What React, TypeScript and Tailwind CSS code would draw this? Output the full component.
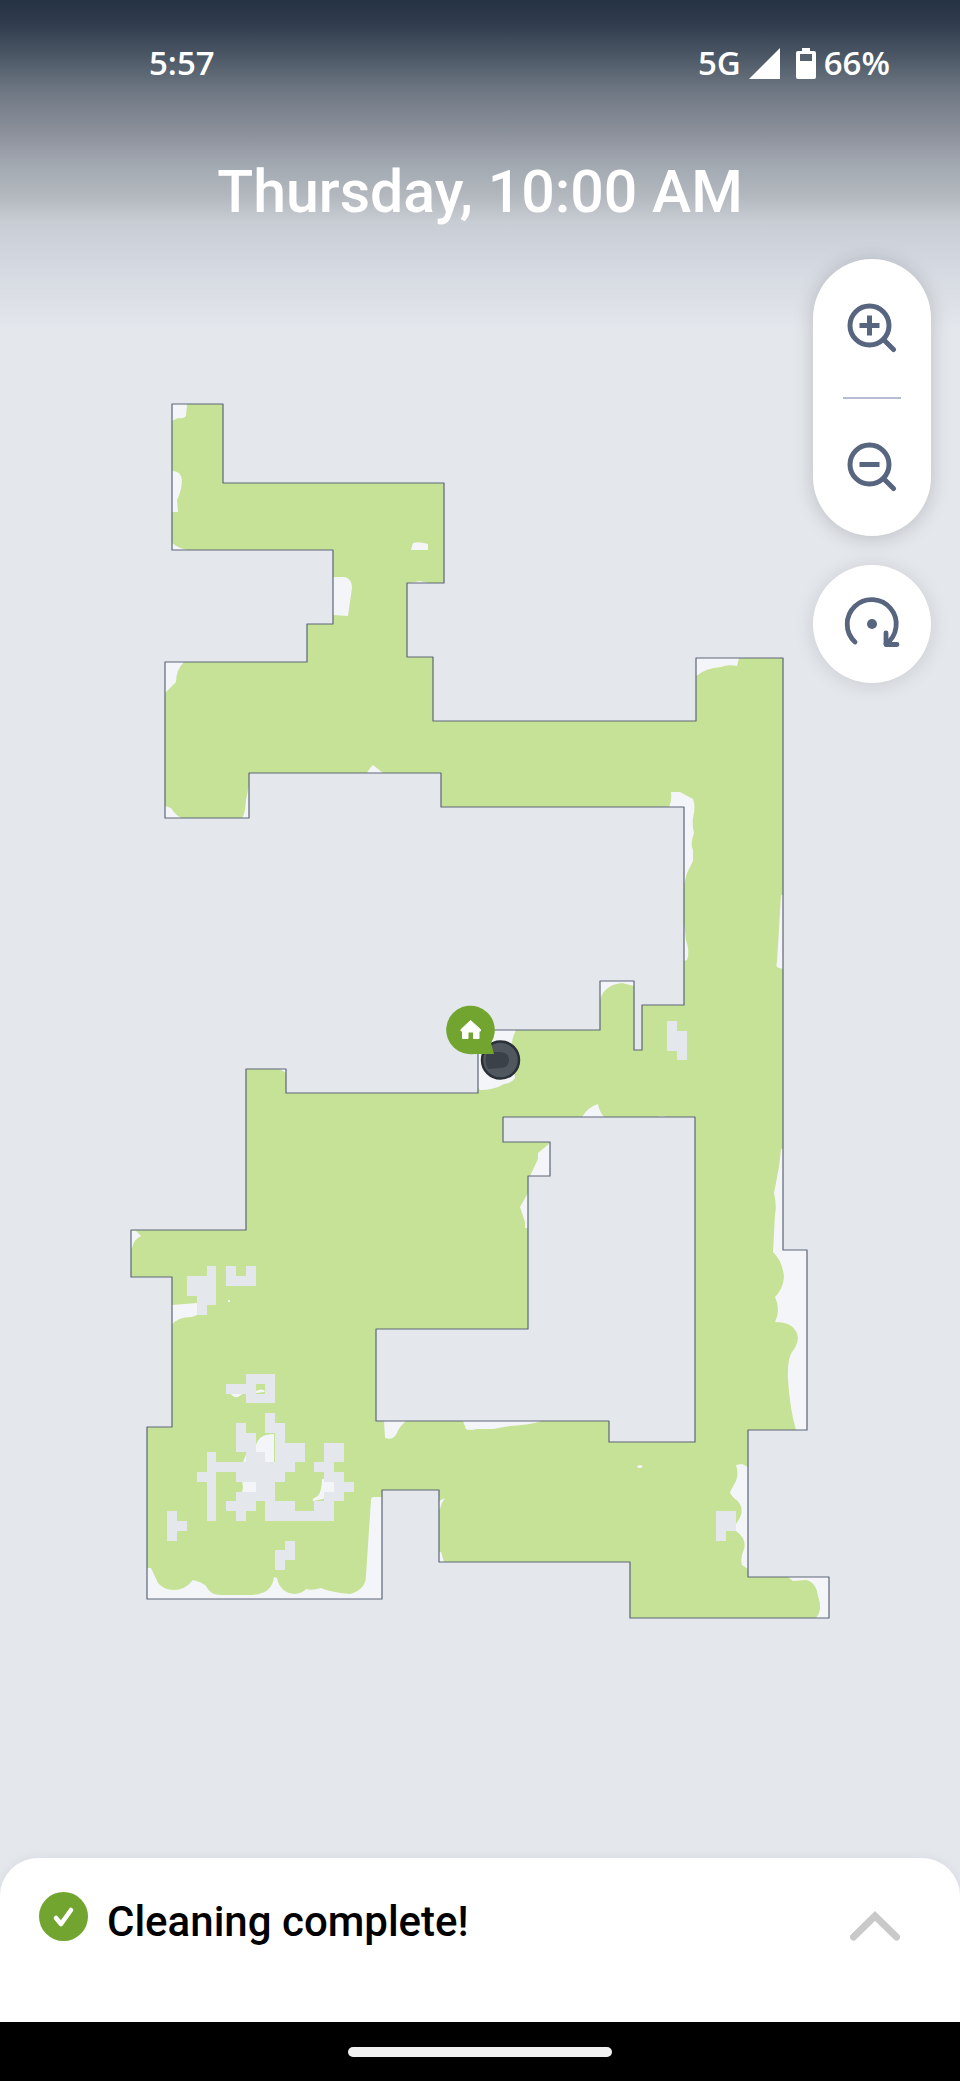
import { useState } from 'react';

// Floor outline: outer wall first, then the enclosed block in the middle
const FLOOR =
  'M172 404H223V483H444V583H407V657H433V721H696V658H783V1250H807V1430H748V1577H829V1618H630V1562H439V1490H382V1599H147V1427H172V1277H131V1230H246V1069H286V1093H478V1030H600V981H634V1050H642V1005H684V807H441V773H249V818H165V662H307V624H333V550H172Z' +
  'M503 1117H695V1442H609V1421H376V1329H528V1176H550V1142H503Z';

// Spots the robot did not reach
const MISSED = [
  'M172 404H187L186 416Q184 419 178 418L172 421Z',
  'M172 471Q181 471 182 480Q182 490 177 500L178 512H172Z',
  'M172 543Q178 548 187 550H172Z',
  'M411 550L413 543Q419 541 428 544V550Z',
  'M409 583L420 581L428 583Z',
  'M333 577H345Q352 579 352 588L348 616L333 615Z',
  'M165 662H184Q176 670 176 682L165 693Z',
  'M367 773Q371 766 373 765L383 773Z',
  'M165 806L171 808Q176 816 182 818H165Z',
  'M249 785L246 800Q245 815 242 818H249Z',
  'M696 658H739L737 666Q728 664 721 667Q706 668 696 676Z',
  'M669 807Q672 800 671 792H680L693 799Q696 806 693 818Q692 824 694 833Q690 844 693 850V861L687 873L684 885V807Z',
  'M684 923L686 940Q690 952 687 960L684 961Z',
  'M781 895L777 962Q775 967 779 968L783 969V895Z',
  'M600 1000Q604 985 622 983L634 986V981H600Z',
  'M478 1030H516Q512 1038 512 1044L515 1078Q512 1083 504 1084Q494 1090 480 1090L478 1088Z',
  'M582 1117Q588 1107 598 1104Q599 1111 604 1117Z',
  'M657 1117L662 1116L667 1117Z',
  'M550 1143L538 1153V1159L530 1176H550Z',
  'M528 1193L520 1207L525 1222V1228H528Z',
  'M131 1230L136 1231L141 1236Q134 1239 132 1248H131Z',
  'M172 1305L197 1303V1315L192 1317Q177 1317 172 1325Z',
  'M280 1069H286V1073Z',
  'M228 1300H230V1302H228Z',
  'M147 1568H151L158 1583Q164 1590 173 1590Q185 1590 192 1581L193 1580Q202 1582 206 1586Q210 1595 221 1595H252Q272 1594 274 1577L277 1578Q280 1593 295 1594Q303 1593 306 1589Q312 1591 321 1588Q330 1592 350 1594Q366 1590 366 1575L371 1500Q371 1497 374 1497H382V1599H147Z',
  'M230 1393Q233 1398 238 1397L244 1393Z',
  'M256 1391Q262 1388 265 1391L264 1392L256 1393Z',
  'M243 1462L247 1452L256 1445Q259 1434 274 1434V1462Z',
  'M242 1481H256V1493H242L243 1487Z',
  'M322 1479Q322 1490 318 1496Q311 1499 313 1501L323 1499L334 1493V1480Z',
  'M384 1421L385 1438Q393 1441 397 1433Q399 1427 406 1421Z',
  'M463 1421L466 1429Q469 1431 477 1429H493L510 1426Q530 1425 542 1421Z',
  'M637 1466L640 1465L643 1466L641 1468H638Z',
  'M439 1501L445 1498Q441 1503 440 1509H439Z',
  'M439 1552H441L444 1562H439Z',
  'M748 1467L742 1464L736 1465Q739 1474 736 1481L730 1492Q730 1494 734 1498Q747 1507 738 1521L736 1524V1531Q747 1539 744 1549Q740 1558 742 1565L748 1569Z',
  'M788 1577L793 1581L806 1580Q816 1582 818 1596Q823 1610 816 1618H829V1577Z',
  'M781 1149L779 1167L774 1193Q777 1207 775 1214L773 1252Q783 1262 784 1277Q783 1289 775 1297Q781 1310 775 1322Q796 1322 798 1338Q797 1346 792 1352Q787 1360 788 1380Q790 1410 796 1430H807V1250H783V1149Z',
];

// Obstacles on the occupancy grid: [col, row, width, height]
const OBSTACLES = [
  [4, 0, 1, 1], [2, 1, 3, 2], [3, 3, 2, 1], [3, 4, 1, 1],
  [6, 0, 1, 1], [8, 0, 1, 1], [6, 1, 3, 1],
  [6, 12, 2, 1], [8, 11, 3, 1], [8, 12, 1, 1], [10, 12, 1, 1], [8, 13, 3, 1],
  [10, 15, 1, 2], [11, 16, 1, 2], [11, 18, 3, 2], [7, 16, 1, 1], [7, 17, 2, 2],
  [8, 19, 2, 1], [5, 20, 8, 1], [7, 21, 5, 1], [9, 22, 2, 1], [7, 23, 4, 1],
  [6, 24, 3, 1], [7, 25, 1, 1], [10, 24, 3, 1], [10, 25, 7, 1],
  [4, 19, 1, 7], [3, 21, 1, 1],
  [16, 18, 2, 2], [15, 20, 2, 1], [16, 21, 2, 1], [17, 22, 2, 1], [16, 23, 2, 1], [15, 24, 2, 1],
  [0, 25, 1, 3], [1, 26, 1, 1], [12, 28, 1, 2], [11, 29, 1, 2],
  [51, -25, 1, 3], [52, -24, 1, 3], [56, 25, 2, 2], [56, 27, 1, 1],
];

export default function App() {
  const [expanded, setExpanded] = useState(false);

  return (
    <div className="flex min-h-screen flex-col bg-[#e4e7ec] bg-[linear-gradient(#253244_0px,#333f50_28px,#505b69_60px,#69737f_86px,#7b828e_108px,#8c919b_134px,#a2a8b0_164px,#b3b8bf_196px,#c8ccd3_222px,#d0d4dd_250px,#d8dce3_282px,#e4e7ec_330px)] font-[Roboto,sans-serif] select-none">
      <StatusBar />
      <h1 className="h-[133px] pt-[30px] text-center text-[59px] leading-[72px] font-medium text-white">
        Thursday, 10:00 AM
      </h1>

      <main className="relative flex-1">
        <CoverageMap />
        <MapControls />
      </main>

      <section className="relative flex h-[164px] items-start rounded-t-[38px] bg-white pt-[34px] pr-[60px] pl-[39px] shadow-[0_0_12px_rgba(0,0,0,0.06)]">
        <svg className="size-[49px] shrink-0" viewBox="0 0 49 49" fill="none">
          <circle cx="24.5" cy="24.5" r="24.5" fill="#72a530" />
          <path d="M17 26L22 32L32 18" stroke="white" strokeWidth="4.6" strokeLinecap="round" strokeLinejoin="round" />
        </svg>
        <p className="ml-[19px] pt-[6px] text-[42px] leading-[48px] font-medium text-black">Cleaning complete!</p>
        <button
          className="mt-[19px] ml-auto text-[#c9c9c9]"
          aria-label="Show details"
          aria-expanded={expanded}
          onClick={() => setExpanded(!expanded)}
        >
          <svg className="h-[30px] w-[50px]" viewBox="0 0 50 30" fill="none" stroke="currentColor" strokeWidth="7" strokeLinecap="round">
            <path d="M3.5 26L25 5L46.5 26" />
          </svg>
        </button>
      </section>

      {/* System gesture bar */}
      <div className="flex h-[59px] items-center justify-center bg-black">
        <div className="h-[10px] w-[264px] rounded-full bg-[#f1f1f1]" />
      </div>
    </div>
  );
}

function StatusBar() {
  return (
    <div className="flex h-[126px] items-center justify-between pr-[70px] pl-[149px] font-['Open_Sans',sans-serif] text-[33px] font-semibold text-white">
      <span>5:57</span>
      <div className="flex items-center gap-2">
        <span>5G</span>
        <svg className="size-[31px]" viewBox="0 0 31 31" fill="currentColor">
          <path d="M31 0V31H0Z" />
        </svg>
        <svg className="ml-2 h-[31px] w-5" viewBox="0 0 20 31">
          <path d="M6 0H14V3H18Q20 3 20 5V29Q20 31 18 31H2Q0 31 0 29V5Q0 3 2 3H6Z" fill="currentColor" />
          <path d="M4 6H16V13H4Z" fill="#566170" />
        </svg>
        <span>66%</span>
      </div>
    </div>
  );
}

// ── Floor plan with coverage, dock and robot ──
function CoverageMap() {
  return (
    <svg className="block w-full" viewBox="0 259 960 1599" role="img" aria-label="Cleaning map">
      <clipPath id="floor">
        <path d={FLOOR} clipRule="evenodd" />
      </clipPath>
      <path d={FLOOR} fill="#c6e296" fillRule="evenodd" />
      <g clipPath="url(#floor)" fill="#f4f5f8">
        {MISSED.map((d) => (
          <path key={d} d={d} />
        ))}
      </g>
      <g transform="translate(167.3 1266.2) scale(9.8)" fill="#e4e7ec" shapeRendering="crispEdges">
        {OBSTACLES.map(([x, y, w, h]) => (
          <rect key={`${x},${y}`} x={x} y={y} width={w} height={h} />
        ))}
      </g>
      <path d={FLOOR} fill="none" stroke="#5d6678" strokeWidth="1.2" strokeLinejoin="round" />

      {/* Robot */}
      <circle cx="500.5" cy="1060" r="18.5" fill="#50575f" stroke="#2a3038" strokeWidth="2.5" />
      <path d="M487 1052H501Q509 1053 509 1060Q509 1067 501 1068L488 1069Q484 1061 487 1052Z" fill="#3a4149" />

      {/* Dock */}
      <path d="M494 1054L474 1054A24.3 24.3 0 1 1 491 1043Z" fill="#72a530" />
      <path
        d="M470.5 1020.5L480.5 1029.5V1031H479V1038.5H473.5V1033Q473.5 1032 472.5 1032H469Q468 1032 468 1033V1038.5H462.5V1031H461V1029.5Z"
        fill="white"
        stroke="white"
        strokeLinejoin="round"
      />
    </svg>
  );
}

function MapControls() {
  return (
    <div className="absolute top-0 right-[29px] flex w-[118px] flex-col gap-[29px] text-[#57657f]">
      <div className="flex h-[277px] flex-col items-center rounded-full bg-white shadow-[0_2px_20px_rgba(0,0,0,0.18)]">
        <button className="flex w-full flex-1 items-center justify-center" aria-label="Zoom in">
          <ZoomGlyph plus />
        </button>
        <div className="h-[2px] w-[58px] bg-[#b5bdd3]" />
        <button className="flex w-full flex-1 items-center justify-center" aria-label="Zoom out">
          <ZoomGlyph />
        </button>
      </div>
      <button
        className="flex h-[118px] items-center justify-center rounded-full bg-white shadow-[0_2px_20px_rgba(0,0,0,0.12)]"
        aria-label="Rotate map"
      >
        <svg className="size-[56px]" viewBox="0 0 56 56" fill="none" stroke="currentColor" strokeWidth="4.8" strokeLinecap="round" strokeLinejoin="round">
          <path d="M11 46A24.5 24.5 0 1 1 42 48" />
          <path d="M42 37V48.5H53" />
          <circle cx="28" cy="28" r="5" fill="currentColor" stroke="none" />
        </svg>
      </button>
    </div>
  );
}

function ZoomGlyph({ plus = false }: { plus?: boolean }) {
  return (
    <svg className="size-[50px]" viewBox="0 0 50 50" fill="none" stroke="currentColor" strokeWidth="5">
      <circle cx="22.5" cy="22.5" r="19.5" />
      <path d="M37.5 37.5L46.5 46.5" strokeLinecap="round" />
      <path d="M12.5 22.5H32.5" />
      {plus && <path d="M22.5 12.5V32.5" />}
    </svg>
  );
}
